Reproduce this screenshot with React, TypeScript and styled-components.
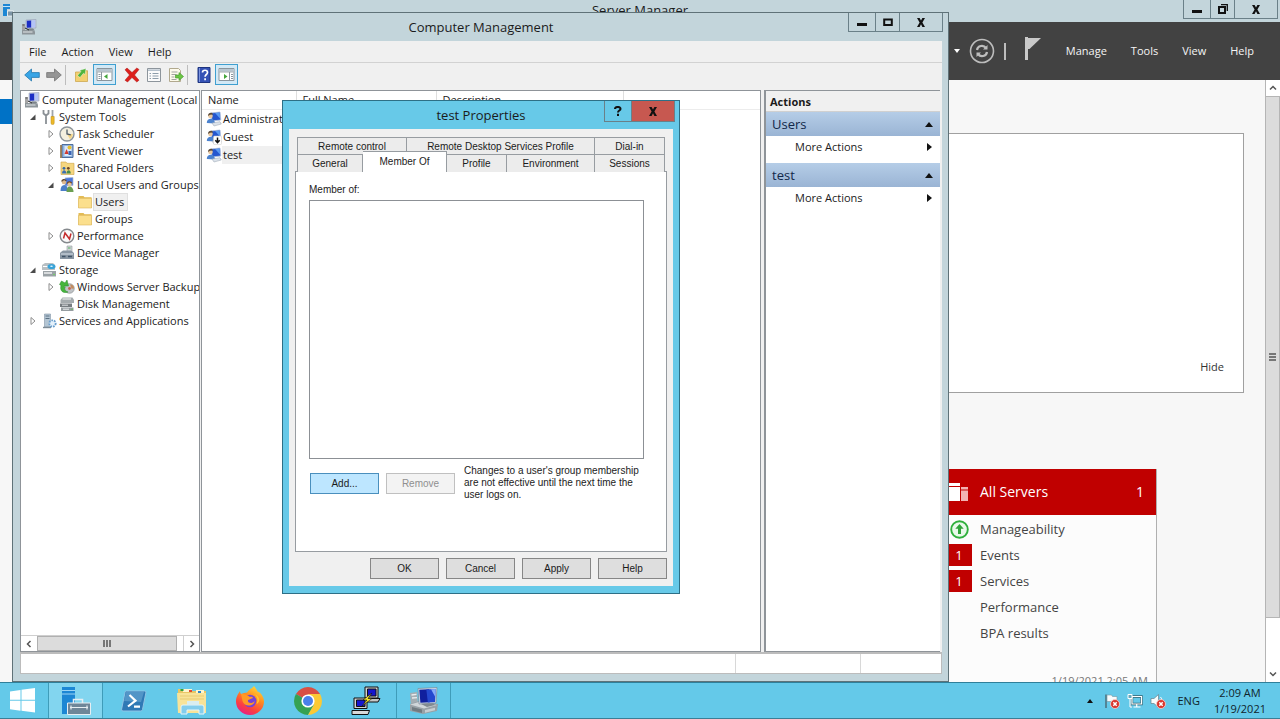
import React from 'react';
import styled, { createGlobalStyle, css } from 'styled-components';

const ui = '"Open Sans", "Noto Sans", sans-serif';
const classic = '"Liberation Sans", Arial, sans-serif';

const GlobalStyle = createGlobalStyle`
  *, *::before, *::after { box-sizing: border-box; }
  html, body { margin: 0; height: 100%; overflow: hidden; }
  body { font: 11px/16px ${ui}; color: #1b1b1b; }
  button, select { font: inherit; color: inherit; margin: 0; padding: 0; border: 0; background: none; border-radius: 0; }
  h1, h2, h3, p, ul { margin: 0; padding: 0; font-weight: 400; list-style: none; }
  svg { display: block; flex: none; }
`;

/* ---------- shell ---------- */
const Desktop = styled.div`
  display: flex;
  flex-direction: column;
  height: 100vh;
  background: #f7f7f7;
`;
const Workspace = styled.main`
  position: relative;
  flex: 1;
  min-height: 0;
  overflow: hidden;
`;

/* ---------- caption buttons ---------- */
const Captions = styled.div`
  position: absolute;
  top: 0;
  right: ${(p: { $right: number }) => p.$right}px;
  display: flex;
  border: 1px solid #6a8088;
  border-top: 0;
`;
const CaptionButton = styled.button<{ $w: number; $tone?: string; $h?: number }>`
  display: grid;
  place-items: center;
  width: ${(p) => p.$w}px;
  height: ${(p) => p.$h || 18}px;
  background: ${(p) => p.$tone || 'transparent'};
  & + & { border-left: 1px solid #6a8088; }
`;
const CloseGlyph = () => (
  <svg width="10" height="9" viewBox="0 0 10 9"><path d="M1 0h2.600L5 2.600 6.400 0H9L6.400 4.400 9 9H6.400L5 6.200 3.600 9H1l2.600-4.600z" fill="#111" /></svg>
);
const MinGlyph = () => (
  <svg width="10" height="9" viewBox="0 0 10 9"><path d="M0 5h10v3H0z" fill="#111" /></svg>
);
const MaxGlyph = () => (
  <svg width="10" height="9" viewBox="0 0 10 9"><path d="M1.200 1.500h7.600v5.600H1.200z" fill="none" stroke="#111" strokeWidth="2" /></svg>
);
const RestoreGlyph = () => (
  <svg width="10" height="10" viewBox="0 0 10 10"><path d="M3 .7h6.300V7" fill="none" stroke="#111" strokeWidth="1.300" /><path d="M1 3h6v6H1z" fill="none" stroke="#111" strokeWidth="2" /></svg>
);

/* ---------- server manager ---------- */
const ServerWindow = styled.section`
  display: flex;
  flex-direction: column;
  height: 100%;
`;
const ServerTitle = styled.header`
  position: relative;
  flex: none;
  height: 22px;
  background: #c3d5db;
  text-align: center;
  font-size: 13px;
  line-height: 21px;
  h2 { font-size: inherit; }
`;
const AppBadge = styled.span`
  position: absolute;
  left: 2px;
  top: 3px;
`;
const ServerBar = styled.nav`
  display: flex;
  flex: none;
  align-items: center;
  justify-content: flex-end;
  height: 58px;
  padding-right: 14px;
  background: #424242;
  color: #f5f5f5;
`;
const BarIcons = styled.div`
  display: flex;
  align-items: center;
  gap: 9px;
  margin-right: 13px;
`;
const BarRule = styled.span`
  width: 2px;
  height: 17px;
  margin-right: 10px;
  background: #bdbdbd;
`;
const BarLink = styled.button`
  height: 24px;
  padding: 0 12px;
  font-weight: 500;
`;
const ServerBody = styled.div`
  display: flex;
  flex: 1;
  min-height: 0;
`;
const ServerNav = styled.aside`
  width: 180px;
  padding-top: 19px;
`;
const NavSelected = styled.div`
  height: 25px;
  background: #0072c6;
`;
const ServerContent = styled.div`
  display: flex;
  flex: 1;
  flex-direction: column;
  align-items: flex-end;
  padding: 53px 21px 0 0;
  overflow: hidden;
`;
const Welcome = styled.div`
  display: flex;
  flex: none;
  align-items: flex-end;
  justify-content: flex-end;
  width: 100%;
  height: 260px;
  padding: 17px;
  border: 1px solid #a0a0a0;
  background: #fff;
`;
const HideButton = styled.button`
  padding: 0 2px;
  color: #333;
`;
const Tile = styled.article`
  display: flex;
  flex: none;
  flex-direction: column;
  width: 216px;
  height: 260px;
  margin: 76px 87px 0 0;
  border-right: 1px solid #b0b0b0;
  background: #fcfcfc;
`;
const TileHead = styled.header`
  display: flex;
  align-items: center;
  height: 46px;
  padding: 0 12px 0 8px;
  background: #c00000;
  color: #fff;
  font-size: 14px;
  svg { margin-right: 11px; }
  h3 { flex: 1; font-size: inherit; }
`;
const TileRows = styled.ul`
  padding-top: 1px;
`;
const TileRow = styled.li`
  display: flex;
  align-items: center;
  height: 26px;
  gap: 8px;
  padding-left: 5px;
  color: #444;
  font-size: 13px;
`;
const TileMark = styled.span<{ $alert?: boolean }>`
  display: grid;
  place-items: center;
  width: 26px;
  height: 22px;
  color: #fff;
  ${(p) => p.$alert && css`background: #c00000;`}
`;
const TileStamp = styled.p`
  margin-top: 27px;
  padding-right: 8px;
  text-align: right;
  color: #777;
`;
const VScroll = styled.div`
  display: flex;
  flex-direction: column;
  width: 15px;
  border-left: 1px solid #b5b5b5;
  background: #fff;
`;
const VArrow = styled.button`
  display: grid;
  place-items: center;
  height: 16px;
`;
const VThumb = styled.div`
  display: grid;
  place-items: center;
  flex: 1;
  margin-bottom: 48px;
  border: 1px solid #b5b5b5;
  border-left: 0;
  background: #dcdcdc;
`;

/* ---------- computer management ---------- */
const ManagementWindow = styled.section`
  position: absolute;
  inset: 12px 331px 0 12px;
  display: flex;
  flex-direction: column;
  padding: 0 6px 7px 7px;
  border: 1px solid #5f7278;
  background: #c3d5db;
`;
const ManagementTitle = styled.header`
  flex: none;
  height: 28px;
  text-align: center;
  h1 { font-size: 13px; line-height: 28px; }
`;
const TitleIcon = styled.span`
  position: absolute;
  left: 8px;
  top: 6px;
`;
const Client = styled.div`
  display: flex;
  flex: 1;
  flex-direction: column;
  min-height: 0;
  background: #f0f0f0;
`;
const MenuBar = styled.nav`
  display: flex;
  flex: none;
  height: 22px;
  gap: 5px;
  padding-left: 4px;
  border-bottom: 1px solid #d2d2d2;
`;
const MenuItem = styled.button`
  padding: 0 5px;
`;
const Toolbar = styled.div`
  display: flex;
  flex: none;
  align-items: center;
  height: 27px;
  gap: 1px;
  padding: 0 0 4px 1px;
`;
const Tool = styled.button<{ $on?: boolean; $apart?: boolean }>`
  display: grid;
  place-items: center;
  width: ${(p) => (p.$on ? 23 : 21)}px;
  height: 21px;
  margin-left: ${(p) => (p.$apart ? 4 : 0)}px;
  border: 1px solid ${(p) => (p.$on ? '#3f9fd0' : 'transparent')};
  background: ${(p) => (p.$on ? '#d3e9f6' : 'transparent')};
`;
const ToolRule = styled.span`
  width: 1px;
  height: 20px;
  margin-right: 4px;
  background: #bdbdbd;
`;
const Panes = styled.div`
  display: grid;
  flex: 1;
  min-height: 0;
  grid-template-columns: 180px minmax(0, 1fr) 178px;
  gap: 1px;
  padding-right: 2px;
`;
const Pane = styled.div`
  display: flex;
  flex-direction: column;
  min-width: 0;
  overflow: hidden;
  border: 1px solid #8f9499;
  background: #fff;
`;
const Tree = styled.ul`
  flex: 1;
  min-height: 0;
  overflow: hidden;
`;
const TreeRow = styled.li<{ $depth: number }>`
  display: flex;
  align-items: center;
  height: 17px;
  padding-left: ${(p) => p.$depth * 18}px;
  white-space: nowrap;
`;
const Twist = styled.span<{ $root?: boolean }>`
  display: grid;
  flex: none;
  place-items: center;
  width: ${(p) => (p.$root ? 2 : 19)}px;
  padding-left: ${(p) => (p.$root ? 0 : 5)}px;
`;
const TreeIcon = styled.span`
  display: grid;
  flex: none;
  place-items: center;
  width: 18px;
`;
const TreeLabel = styled.span<{ $selected?: boolean }>`
  flex: none;
  padding: 0 3px 0 1px;
  ${(p) => p.$selected && css`background: #f0f0f0; box-shadow: 0 0 0 1px #e0e0e0;`}
`;
const HScroll = styled.div`
  display: flex;
  flex: none;
  height: 16px;
  background: #fff;
  border-top: 1px solid #cfcfcf;
`;
const HArrow = styled.button`
  display: grid;
  place-items: center;
  width: 16px;
  &:last-child { border-left: 1px solid #cfcfcf; }
`;
const HThumb = styled.div`
  display: grid;
  place-items: center;
  flex: 1;
  margin-right: 6px;
  border: 1px solid #b0b0b0;
  background: #dcdcdc;
`;
const UserTable = styled.table`
  width: 100%;
  table-layout: fixed;
  border-collapse: collapse;
  th {
    height: 18px;
    padding: 0 6px;
    border-right: 1px solid #dedede;
    border-bottom: 1px solid #ececec;
    font-weight: 400;
    text-align: left;
  }
  th:last-child { border-right: 0; }
  td { height: 18px; padding: 0; }
`;
const UserCell = styled.span<{ $selected?: boolean }>`
  display: flex;
  align-items: center;
  height: 18px;
  padding-left: 4px;
  white-space: nowrap;
  span {
    flex: 1;
    padding: 1px 0 1px 1px;
    background: ${(p) => (p.$selected ? '#f0f0f0' : 'transparent')};
  }
`;
const ActionsPane = styled(Pane)`
  margin-left: 2px;
  border-width: 1px 0 1px 2px;
`;
const ActionsTitle = styled.h2`
  height: 21px;
  padding-left: 4px;
  border-bottom: 1px solid #d0d0d0;
  background: #f0f0f0;
  font-size: 11px;
  font-weight: 700;
  line-height: 21px;
`;
const ActionBand = styled.button`
  display: flex;
  flex: none;
  align-items: center;
  justify-content: space-between;
  height: 24px;
  padding: 0 7px 0 6px;
  background: linear-gradient(#b5cde7, #9ab4d4);
  color: #12284a;
  font-size: 13px;
`;
const ActionItem = styled.button`
  display: flex;
  flex: none;
  align-items: center;
  justify-content: space-between;
  height: 22px;
  margin-bottom: 5px;
  padding: 0 8px 0 29px;
`;
const StatusBar = styled.footer`
  display: grid;
  flex: none;
  grid-template-columns: 1fr 125px 81px;
  height: 22px;
  border: 1px solid #bcbcbc;
  border-width: 2px 1px 1px;
  background: #fff;
  span + span { border-left: 1px solid #d8d8d8; }
`;

/* ---------- properties dialog ---------- */
const Dialog = styled.section`
  position: absolute;
  left: 282px;
  top: 100px;
  width: 398px;
  padding: 0 6px 7px;
  border: 1px solid #2d6f86;
  background: #67c9e8;
  font: 10px/12px ${classic};
`;
const DialogTitle = styled.h2`
  height: 28px;
  font: 13px/28px ${ui};
  text-align: center;
`;
const DialogBody = styled.div`
  padding: 8px 6px 7px;
  background: #f0f0f0;
`;
const TabRow = styled.div<{ $cols: string }>`
  display: grid;
  grid-template-columns: ${(p) => p.$cols};
  height: 17px;
  margin: 0 2px;
`;
const Tab = styled.button<{ $active?: boolean }>`
  padding-top: 1px;
  border: 1px solid #979ca1;
  border-width: 1px 1px 0 0;
  background: #ececec;
  &:first-child { border-left-width: 1px; }
  ${(p) =>
    p.$active &&
    css`
      position: relative;
      height: 21px;
      margin-top: -3px;
      padding-bottom: 2px;
      background: #fff;
    `}
`;
const TabPanel = styled.div`
  height: 381px;
  padding: 12px 22px 12px 13px;
  border: 1px solid #979ca1;
  background: #fff;
  label { display: block; margin-bottom: 4px; }
`;
const MemberList = styled.select`
  display: block;
  width: 100%;
  height: 259px;
  border: 1px solid #8c9095;
  background: #fff;
  appearance: none;
  outline: 0;
`;
const MemberActions = styled.div`
  display: flex;
  gap: 7px;
  padding: 6px 0 0 1px;
  p { padding-left: 2px; white-space: nowrap; }
`;
const PushButton = styled.button<{ $hot?: boolean }>`
  flex: none;
  width: 69px;
  height: 21px;
  border: 1px solid ${(p) => (p.$hot ? '#4a8fbd' : '#868686')};
  background: ${(p) => (p.$hot ? '#bde6ff' : '#dedede')};
  &:disabled { color: #8f8f8f; background: #f3f3f3; border-color: #c0c0c0; }
  ${MemberActions} & { margin-top: 8px; }
`;
const DialogButtons = styled.footer`
  display: flex;
  justify-content: flex-end;
  gap: 7px;
  padding-top: 6px;
`;

/* ---------- taskbar ---------- */
const Taskbar = styled.nav`
  display: flex;
  flex: none;
  height: 37px;
  gap: 3px;
  border-top: 1px solid #2f7f9a;
  border-bottom: 1px solid #3a7f96;
  background: #64c9e9;
`;
const StartButton = styled.button`
  display: grid;
  place-items: center;
  width: 45px;
`;
const TaskButton = styled.button<{ $open?: boolean; $active?: boolean }>`
  display: grid;
  place-items: center;
  width: 55px;
  border: 1px solid ${(p) => (p.$open ? '#3f9cb9' : 'transparent')};
  border-width: 0 1px;
  background: ${(p) => (p.$active ? '#82d5ef' : 'transparent')};
`;
const Tray = styled.div`
  display: flex;
  align-items: center;
  gap: 7px;
  margin-left: auto;
  padding-right: 14px;
  color: #10242c;
`;
const TrayMore = styled.button`
  margin-right: 3px;
`;
const Language = styled.span`
  margin: 0 7px 0 4px;
`;
const Clock = styled.time`
  text-align: center;
`;

/* ---------- icons ---------- */
const ComputerIcon = ({ size = 16 }: { size?: number }) => (
  <svg width={size} height={size} viewBox="0 0 16 16">
    <path d="M5 1l10-.6V9L5 9.600z" fill="#c3cbe2" stroke="#9199ad" strokeWidth=".5" />
    <path d="M5.800 1.700l4.600-.2v7l-4.600.3z" fill="#1c2ec4" /><path d="M10.400 1.500l3.800-.2v7l-3.800.2z" fill="#b4c4f6" />
    <path d="M1 5h3v6H1z" fill="#a4a4a4" /><path d="M1.500 6h2" stroke="#555" />
    <path d="M8 9.600h4l2 2H7z" fill="#7d858b" />
    <path d="M1 11h11l2 1.400v3H1z" fill="#8d959a" /><path d="M2 13h9.500" stroke="#e2e6e8" /><path d="M4 9l4 2" stroke="#222" />
  </svg>
);
const BigComputerIcon = () => (
  <svg width="30" height="28" viewBox="0 0 30 28">
    <path d="M1 6l7-1 1 13H2z" fill="#a4adb3" /><path d="M2.500 8l5-.6M3 11l5-.4" stroke="#e9edef" strokeWidth="1.400" />
    <path d="M1 17l9-3 19 3-1 7-14 3-13-3z" fill="#98a1a7" /><path d="M1 17.500l9-2.500 18 3-13 3.500z" fill="#d0d6da" />
    <path d="M3 20l10 2.500V26L3 23.500z" fill="#717b81" /><path d="M16 23l10-2.200v2.500L16 25.700z" fill="#c7ced2" /><path d="M14 15h9l3 3-8 2-6-3z" fill="#818a90" />
    <path d="M9 1.500l19-1-1 15.500-17 1z" fill="#ccd7e6" stroke="#74808d" strokeWidth=".6" />
    <path d="M10.300 2.800l10-.5.6 12.900-9.500.6z" fill="#101f9e" /><path d="M17.300 2.500l9.500-.6-.8 13-7.100.5z" fill="#2448cf" /><path d="M22 2.200l4.800-.3-.5 8z" fill="#86aaf7" />
  </svg>
);
const UserIcon = ({ down }: { down?: boolean }) => (
  <svg width="16" height="16" viewBox="0 0 16 16">
    <path d="M5 2l9-1 .8 8L6 10z" fill="#2456cf" stroke="#b3c2dc" strokeWidth=".8" /><path d="M9 2l4.600-.5.5 6z" fill="#5b9bf2" />
    <circle cx="4.500" cy="5" r="2.300" fill="#e8c79f" /><path d="M2 5C2 2 4 1.600 5.200 1.800 6.600 2 7.200 3.500 7.200 3.500L4 3.800z" fill="#5b4a38" />
    <path d="M.8 12c0-3 1.800-4.300 4-4.300S9 9.500 9 12.500z" fill="#4b82cf" /><path d="M6 12l8-1.300 1.300 2.300L8 15z" fill="#dbe2ea" stroke="#96a2b0" strokeWidth=".5" />
    {down && <g><rect x="7.500" y="7" width="8" height="8.500" rx="1" fill="#fff" stroke="#c9c9c9" strokeWidth=".5" /><path d="M11.500 8.500v5M9.300 11.300l2.200 2.300 2.200-2.300" stroke="#111" strokeWidth="1.500" fill="none" /></g>}
  </svg>
);
const GroupsIcon = () => (
  <svg width="16" height="16" viewBox="0 0 16 16">
    <path d="M6 1l8-.5v8L6 9z" fill="#4b76db" stroke="#adb9cf" strokeWidth=".7" />
    <circle cx="5" cy="5" r="2.300" fill="#dcb88d" /><path d="M1.500 14c0-4 1.500-6 3.700-6S9 10 9 14z" fill="#4b7ec9" /><path d="M2.800 4.500C3 2.500 6 2 7.300 4" stroke="#59422e" strokeWidth="1.300" fill="none" />
    <circle cx="10.500" cy="7" r="2.200" fill="#e5c59b" /><path d="M7.500 15c0-3.500 1-5.500 3-5.500s4 2 4 5.500z" fill="#6a9f52" /><path d="M8.300 6.600c.4-2 3.500-2.200 4.400-.4" stroke="#73481f" strokeWidth="1.300" fill="none" />
  </svg>
);
const FolderIcon = () => (
  <svg width="16" height="16" viewBox="0 0 16 16">
    <path d="M1.500 2h5l1 1.300h7V14h-13z" fill="#e3bc55" /><path d="M1.500 4.300h13V14h-13z" fill="#fbdf8d" stroke="#dcb55a" strokeWidth=".6" />
  </svg>
);
const SharedIcon = () => (
  <svg width="16" height="16" viewBox="0 0 16 16">
    <path d="M2 2h5l1 1.300h7V14.500H2z" fill="#f5d67f" stroke="#cca348" strokeWidth=".6" />
    <circle cx="5" cy="8.300" r="1.400" fill="#3567a5" /><path d="M3 13.500c0-4.500 4.300-4.500 4.300 0z" fill="#3b6fb3" /><circle cx="9.300" cy="8.300" r="1.400" fill="#6b4427" /><path d="M7.500 13.500c0-4.500 4.300-4.500 4.300 0z" fill="#4a8b4c" />
  </svg>
);
const ToolsIcon = () => (
  <svg width="16" height="16" viewBox="0 0 16 16">
    <path d="M2.500 1v3.500L5 6.500 7.500 4.500V1M5 6v9" stroke="#8a9095" strokeWidth="1.800" fill="none" />
    <path d="M11.500 1v7" stroke="#a0a5aa" strokeWidth="1.800" /><path d="M10 7.500h3.200V14a1.600 1.600 0 01-3.200 0z" fill="#edb928" stroke="#b98a18" strokeWidth=".5" />
  </svg>
);
const ClockIcon = () => (
  <svg width="16" height="16" viewBox="0 0 16 16">
    <circle cx="8" cy="8" r="7" fill="#f3efdf" stroke="#8d949a" strokeWidth="1.400" /><path d="M8 8l3 5.200A6 6 0 0013.800 8z" fill="#f3d488" /><path d="M8 3.500V8l3.800.8" stroke="#4c5a68" strokeWidth="1.300" fill="none" />
  </svg>
);
const EventIcon = () => (
  <svg width="16" height="16" viewBox="0 0 16 16">
    <path d="M3 1.500h11v13H3z" fill="#8fb2df" stroke="#4e6e9d" /><path d="M5.500 3h7v10h-7z" fill="#dbe9f8" /><path d="M2 2v13" stroke="#8c6b3f" strokeWidth="1.600" />
    <circle cx="10.500" cy="4.500" r="2" fill="#e9c02f" /><path d="M7.500 6l2.300 5H5.500z" fill="#d3382f" /><path d="M9.500 8h3v4h-3z" fill="#3a64b4" />
  </svg>
);
const PerfIcon = () => (
  <svg width="16" height="16" viewBox="0 0 16 16">
    <circle cx="8" cy="8" r="6.800" fill="#fafafa" stroke="#85898d" strokeWidth="1.400" /><path d="M4.500 10.500L6 5l4.500 6 1.500-5.500" stroke="#c42c2c" strokeWidth="1.500" fill="none" />
  </svg>
);
const DeviceIcon = () => (
  <svg width="16" height="16" viewBox="0 0 16 16">
    <path d="M8 1h5v6H8z" fill="#d0d5d8" stroke="#959c9f" strokeWidth=".6" /><path d="M9 3h2.500" stroke="#53b25a" />
    <path d="M2 7l2-1.500h8L15 8v6H1V8z" fill="#8895a2" /><path d="M2 9h12" stroke="#cdd7e0" strokeWidth="1.200" /><path d="M3 11.500h3.500M9 11.500h4" stroke="#3f5368" strokeWidth="1.600" />
  </svg>
);
const StorageIcon = () => (
  <svg width="16" height="16" viewBox="0 0 16 16">
    <path d="M1 3l3-2h8l2 2v5H1z" fill="#b8bfc3" /><path d="M2 4.500h6" stroke="#fff" /><ellipse cx="10.500" cy="4.500" rx="4" ry="2.600" fill="#38a3d8" /><ellipse cx="10.500" cy="4.200" rx="1.300" ry=".8" fill="#e3f5ff" />
    <path d="M2 9h13v5.500H2z" fill="#9ba2a6" /><path d="M3 11h8" stroke="#f2f4f5" strokeWidth="1.400" /><circle cx="13" cy="12.500" r=".8" fill="#6bdc58" />
  </svg>
);
const BackupIcon = () => (
  <svg width="16" height="16" viewBox="0 0 16 16">
    <circle cx="10.500" cy="9.500" r="4.800" fill="#bfc3c6" stroke="#84888b" strokeWidth=".6" /><circle cx="10.500" cy="9.500" r="1.400" fill="#c46052" /><path d="M11 5.500a4 4 0 014 4l-2.500.3z" fill="#c48c5d" />
    <path d="M2.500 2L6 4l2-3 1.500 6H5L6 8.500c-1 2 0 3.500 3 4.500-5 2-8.500-1.500-7-6.500L.5 5.500z" fill="#46b53c" stroke="#28882b" strokeWidth=".5" />
  </svg>
);
const DiskIcon = () => (
  <svg width="16" height="16" viewBox="0 0 16 16">
    <path d="M1.500 4l2-2.500h10L15 4v3H1.500z" fill="#a5abae" /><path d="M3.500 3h8.500" stroke="#e7eaeb" strokeWidth="1.200" />
    <path d="M1 7.500h12V11H1z" fill="#777d81" /><path d="M3 9.200h6" stroke="#dfe3e5" /><path d="M2 11.500h12.500V15H2z" fill="#959ca0" /><path d="M4 13.200h6" stroke="#eceff0" /><circle cx="13" cy="13.200" r=".8" fill="#6ac556" />
  </svg>
);
const ServicesIcon = () => (
  <svg width="16" height="16" viewBox="0 0 16 16">
    <path d="M3.500 1h6v13h-6z" fill="#b3c5d3" stroke="#8396a6" strokeWidth=".6" /><path d="M4.500 3h4M4.500 5.500h4" stroke="#5c7284" /><path d="M2 14.500h8" stroke="#7d8b96" strokeWidth="1.400" />
    <circle cx="11.500" cy="10.500" r="3.200" fill="#e5f1fb" stroke="#6a9fcd" strokeWidth="1.800" strokeDasharray="1.700 1" />
  </svg>
);
const ArrowIcon = ({ back }: { back?: boolean }) => (
  <svg width="16" height="16" viewBox="0 0 16 16">
    <path d={back ? 'M.7 8l6.800-6v3.600H15.300v4.800H7.500V14z' : 'M15.300 8L8.500 2v3.600H.7v4.800h7.800V14z'} fill={back ? '#39a5e6' : '#969696'} stroke={back ? '#2479ae' : '#737373'} strokeWidth=".8" />
  </svg>
);
const UpFolderIcon = () => (
  <svg width="16" height="16" viewBox="0 0 16 16">
    <path d="M1.500 5h5l1-1.300h6V14.500h-12z" fill="#f4d071" stroke="#c8a145" strokeWidth=".7" /><path d="M3.500 8.500L7 4.500 5.700 3.300 12 1.500l-1 6-1.500-1.200L6 10.500z" fill="#51b43d" stroke="#fff" strokeWidth=".4" />
  </svg>
);
const PaneIcon = ({ right }: { right?: boolean }) => (
  <svg width="17" height="15" viewBox="0 0 17 15">
    <path d="M1 1.500h15v12H1z" fill="#fff" stroke="#8a959d" /><path d="M1.500 2h14v2.600h-14z" fill="#b9c6d0" /><path d="M1.500 5h14" stroke="#8a959d" strokeWidth=".8" />
    <path d={right ? 'M11.500 5v8M13 7.500h2M13 9.500h2M13 11.500h2' : 'M5.500 5v8M2.500 7.500h2M2.500 9.500h2M2.500 11.500h2'} stroke="#8a959d" />
    <path d={right ? 'M6 7l3.500 2.500L6 12z' : 'M11.500 7v5L8 9.500z'} fill="#43a53a" />
  </svg>
);
const DeleteIcon = () => (
  <svg width="16" height="16" viewBox="0 0 16 16">
    <path d="M1 2.800L3 1l5 4.500L12.800 1 15 2.500 10.500 8l4.500 5.200-2.200 1.800L8 10.500 3.500 15 1 13.200 5.500 8z" fill="#dd1f1c" stroke="#a61613" strokeWidth=".5" />
  </svg>
);
const SheetIcon = () => (
  <svg width="16" height="16" viewBox="0 0 16 16">
    <path d="M1.500 1.500h13v13h-13z" fill="#fbfbfb" stroke="#8d959c" /><path d="M2 3.200h12" stroke="#b6c2cd" strokeWidth="1.600" /><path d="M3.500 6.500h1.500M3.500 9h1.500M3.500 11.500h1.500M6.500 6.500h6M6.500 9h6M6.500 11.500h6" stroke="#8d9daa" />
  </svg>
);
const ExportIcon = () => (
  <svg width="16" height="16" viewBox="0 0 16 16">
    <path d="M1.500 1.500h9l2 2v11h-11z" fill="#fdfaec" stroke="#b1a98e" /><path d="M3.500 5h6M3.500 7.500h5M3.500 10h3M3.500 12.500h5" stroke="#a3a3a0" /><path d="M7.500 8h3.500V5.500l4.500 4-4.500 4V11H7.500z" fill="#6cc544" stroke="#3c9427" strokeWidth=".6" />
  </svg>
);
const HelpIcon = () => (
  <svg width="14" height="16" viewBox="0 0 14 16">
    <path d="M1 .500h12v15H1z" fill="#3552b5" stroke="#1e347f" /><path d="M2.500 1v14" stroke="#7d95df" /><path d="M5.500 5.500c0-3 5-3 5 0 0 2-2.400 2-2.400 4.200M8.100 11.200v2" stroke="#fff" strokeWidth="1.700" fill="none" />
  </svg>
);
const Expander = ({ open }: { open?: boolean }) => (
  <svg width="8" height="8" viewBox="0 0 8 8">
    {open ? <path d="M6.500 1.500v5.500H1z" fill="#4a4a4a" /> : <path d="M2 .500L6 4 2 7.500z" fill="#fff" stroke="#8d8d8d" />}
  </svg>
);
const Chevron = ({ d }: { d: string }) => (
  <svg width="8" height="8" viewBox="0 0 8 8"><path d={d} fill="none" stroke="#555" strokeWidth="1.500" /></svg>
);
const BandArrow = () => (
  <svg width="8" height="5" viewBox="0 0 8 5"><path d="M0 5l4-5 4 5z" fill="#111" /></svg>
);
const ItemArrow = () => (
  <svg width="5" height="8" viewBox="0 0 5 8"><path d="M0 0l5 4-5 4z" fill="#111" /></svg>
);
const RefreshIcon = () => (
  <svg width="26" height="26" viewBox="0 0 26 26" fill="none" stroke="#bdbdbd">
    <circle cx="13" cy="13" r="11.500" strokeWidth="1.600" /><path d="M8 12c.6-4.500 6.500-5.500 9-2M18 14c-.6 4.500-6.500 5.500-9 2" strokeWidth="2.200" /><path d="M18.500 7v4.500H14zM7.500 19v-4.500H12z" fill="#bdbdbd" stroke="none" />
  </svg>
);
const FlagIcon = () => (
  <svg width="16" height="28" viewBox="0 0 16 28"><path d="M0 0h3v23H0z" fill="#c9c9c9" /><path d="M3 1h13L4.500 12H3z" fill="#c9c9c9" /></svg>
);
const ServersIcon = () => (
  <svg width="20" height="20" viewBox="0 0 20 20"><path d="M0 1h11v3H0zM0 5h11v14H0z" fill="#fff" /><path d="M12 5h7v2.500h-7zM12 8.500h7V19h-7z" fill="#f2b3b3" /></svg>
);
const OnlineIcon = () => (
  <svg width="19" height="19" viewBox="0 0 19 19"><circle cx="9.500" cy="9.500" r="8.300" fill="#e9f9ea" stroke="#2fb03c" strokeWidth="1.900" /><path d="M9.500 4l4.200 4.800H11V14H8V8.800H5.300z" fill="#2fa43a" /></svg>
);
const ServerAppIcon = () => (
  <svg width="30" height="28" viewBox="0 0 30 28">
    <path d="M1 0h13v16H7v11H1z" fill="#1c87d4" /><path d="M1 3.500h13M1 7h13" stroke="#9bd4f5" />
    <path d="M12.500 16v-3.500h9V16" stroke="#e6eef2" strokeWidth="1.500" fill="none" /><path d="M6.500 16h23v11.500h-23z" fill="#6e8698" stroke="#e6eef2" /><path d="M9 20.500h18M10 18.500v4M26 18.500v4" stroke="#e6eef2" strokeWidth="1.200" />
  </svg>
);
const WindowsLogo = () => (
  <svg width="25" height="25" viewBox="0 0 25 25" fill="#fff"><path d="M0 3.500l10.500-1.600v9.900H0zM11.500 1.800L25 0v11.800H11.500zM0 12.800h10.500v9.900L0 21.200zM11.500 12.800H25v11.700l-13.500-1.800z" /></svg>
);
const PowerShellIcon = () => (
  <svg width="26" height="22" viewBox="0 0 26 22">
    <path d="M5.500 1h18q1.800 0 1.400 1.800L21.500 19.500q-.4 1.500-2 1.500H2q-1.800 0-1.400-1.800L4 2.400Q4.300 1 5.500 1z" fill="#2f79b5" stroke="#8fc3e4" /><path d="M5 2h18L20 12 3 11z" fill="#6ba9d4" opacity=".6" />
    <path d="M8.500 5l6 5.700L7 16.500M13 16.700h6" stroke="#fff" strokeWidth="2.200" fill="none" />
  </svg>
);
const ExplorerIcon = () => (
  <svg width="32" height="28" viewBox="0 0 32 28">
    <path d="M2 2h8l2 2h18v22H2z" fill="#e9c765" /><path d="M1 6h29v20H2z" fill="#f8e398" /><path d="M7 2h9v3H7zM20 3h8v3h-8z" fill="#fff6cf" /><path d="M4.500 2h3v2h-3z" fill="#30a340" /><path d="M13 3h3v2h-3z" fill="#e04a32" /><path d="M22 4h3v2h-3z" fill="#2b86c9" />
    <path d="M4 9h24M4 12h24" stroke="#e8cb72" /><path d="M5 27v-7q0-2 2-2h19q2 0 2 2v7h-5v-4H11v4z" fill="#83cdec" stroke="#e4f5fb" /><path d="M11 14h12v4H11z" fill="#d9edf0" />
  </svg>
);
const FirefoxIcon = () => (
  <svg width="30" height="30" viewBox="0 0 30 30">
    <defs><linearGradient id="ff" x1=".8" y1="0" x2=".3" y2="1"><stop offset="0" stopColor="#ffe13c" /><stop offset=".4" stopColor="#ff8b1f" /><stop offset=".75" stopColor="#fb3d42" /><stop offset="1" stopColor="#e3208a" /></linearGradient></defs>
    <path d="M19 0c2 2.500 3 4 3.500 5.500 1.500 0 6.500 4 6.500 10a14 13.500 0 01-28 0c0-5 2.500-8 4-10.500 0 1.500.5 2.500 1 3C8 7 10 6.500 12 6.500 14 3.500 17 2.500 19 0z" fill="url(#ff)" />
    <circle cx="15" cy="15" r="6.300" fill="#7543d8" /><path d="M6 8c4-.5 7 1 9 3 2-.5 3 .5 3 1-2 .3-3 1.700-5 2-1 3 4 4.500 6.500 1 .5 5-10 7-12 0z" fill="#ff9a24" /><path d="M19 8c3 2 4.500 6 2.500 10 4-1.500 4-8-2.500-10z" fill="#ffc52f" />
  </svg>
);
const ChromeIcon = () => (
  <svg width="28" height="28" viewBox="0 0 28 28">
    <path d="M14 14L1.900 7A14 14 0 0126.100 7z" fill="#d94f43" /><path d="M14 14L1.900 7A14 14 0 0014 28l6-10.500z" fill="#35a153" /><path d="M26.100 7H14l6 10.500L14 28A14 14 0 0026.100 7z" fill="#fbc934" />
    <circle cx="14" cy="14" r="6.600" fill="#fff" /><circle cx="14" cy="14" r="5" fill="#4a80ea" />
  </svg>
);
const PuttyIcon = () => (
  <svg width="30" height="30" viewBox="0 0 30 30" stroke="#111">
    <path d="M14 1h13v11H14z" fill="#d3d3d3" /><path d="M16.500 3h8.500v7h-8.500z" fill="#1616cf" /><path d="M15 12.500h14l-2 3.500H15z" fill="#c6c6c6" />
    <path d="M3 12h13v10.500H3z" fill="#d3d3d3" /><path d="M5.500 14h8.500v6.500H5.500z" fill="#1616cf" /><path d="M1 24.500h17.500L17 28.500H1z" fill="#d8d8d8" />
    <path d="M21 7l-9 7h4l-5 6 10-7.500h-4z" fill="#ffee29" strokeWidth=".6" />
  </svg>
);
const RedCross = () => (
  <g><circle cx="11" cy="11" r="4.500" fill="#d9352c" stroke="#f6d5d2" strokeWidth=".8" /><path d="M9.300 9.300l3.400 3.400M12.700 9.300l-3.400 3.400" stroke="#fff" strokeWidth="1.500" /></g>
);
const TrayFlag = () => (
  <svg width="16" height="16" viewBox="0 0 16 16"><path d="M2 1.500v13.500" stroke="#4c6e7a" strokeWidth="1.500" /><path d="M3 2h4.500l1 1.500H13V10H8L7 8.500H3z" fill="#f7fbfc" stroke="#7797a1" strokeWidth=".6" /><RedCross /></svg>
);
const TrayNet = () => (
  <svg width="16" height="16" viewBox="0 0 16 16"><path d="M5 3.500h9.500v7.500H5z" fill="#64c9e9" stroke="#32616f" strokeWidth="2.400" /><path d="M5 3.500h9.500v7.500H5zM9.700 11v2.700M6.500 14h7" fill="none" stroke="#fff" strokeWidth="1.200" /><path d="M1 1.500h4v4H1zM3 5.500V14h2" stroke="#fff" fill="#64a9be" /></svg>
);
const TraySound = () => (
  <svg width="16" height="16" viewBox="0 0 16 16"><path d="M1 5.500h3l4.500-4v13l-4.500-4H1z" fill="#f8fcfd" stroke="#64818c" strokeWidth=".7" /><path d="M10.500 4q1.500 1.500 1.500 4" stroke="#fff" fill="none" /><RedCross /></svg>
);

/* ---------- data ---------- */
type Node = { label: string; depth: number; icon: React.ReactNode; open?: boolean; leaf?: boolean; selected?: boolean };
const nodes: Node[] = [
  { label: 'System Tools', depth: 0, icon: <ToolsIcon />, open: true },
  { label: 'Task Scheduler', depth: 1, icon: <ClockIcon /> },
  { label: 'Event Viewer', depth: 1, icon: <EventIcon /> },
  { label: 'Shared Folders', depth: 1, icon: <SharedIcon /> },
  { label: 'Local Users and Groups', depth: 1, icon: <GroupsIcon />, open: true },
  { label: 'Users', depth: 2, icon: <FolderIcon />, leaf: true, selected: true },
  { label: 'Groups', depth: 2, icon: <FolderIcon />, leaf: true },
  { label: 'Performance', depth: 1, icon: <PerfIcon /> },
  { label: 'Device Manager', depth: 1, icon: <DeviceIcon />, leaf: true },
  { label: 'Storage', depth: 0, icon: <StorageIcon />, open: true },
  { label: 'Windows Server Backup', depth: 1, icon: <BackupIcon /> },
  { label: 'Disk Management', depth: 1, icon: <DiskIcon />, leaf: true },
  { label: 'Services and Applications', depth: 0, icon: <ServicesIcon /> },
];
const users = [
  { name: 'Administrator' },
  { name: 'Guest', down: true },
  { name: 'test', selected: true },
];

function ServerManager() {
  return (
    <ServerWindow>
      <ServerTitle>
        <AppBadge>
          <svg width="12" height="14" viewBox="0 0 12 14"><path d="M1 1h7v5H5v7H1z" fill="#1c87d4" /><path d="M1 3.500h7" stroke="#c3e4f7" /><path d="M5.500 8h6v5h-6z" fill="#7c95a5" stroke="#fff" strokeWidth=".7" /></svg>
        </AppBadge>
        <h2>Server Manager</h2>
        <Captions $right={2}>
          <CaptionButton $w={26} aria-label="Minimize"><MinGlyph /></CaptionButton>
          <CaptionButton $w={24} aria-label="Restore"><RestoreGlyph /></CaptionButton>
          <CaptionButton $w={43} aria-label="Close"><CloseGlyph /></CaptionButton>
        </Captions>
      </ServerTitle>
      <ServerBar>
        <BarIcons>
          <svg width="6" height="4" viewBox="0 0 6 4"><path d="M0 0h6L3 4z" fill="#fff" /></svg>
          <RefreshIcon />
          <BarRule />
          <FlagIcon />
        </BarIcons>
        <BarLink>Manage</BarLink>
        <BarLink>Tools</BarLink>
        <BarLink>View</BarLink>
        <BarLink>Help</BarLink>
      </ServerBar>
      <ServerBody>
        <ServerNav><NavSelected /></ServerNav>
        <ServerContent>
          <Welcome><HideButton>Hide</HideButton></Welcome>
          <Tile>
            <TileHead><ServersIcon /><h3>All Servers</h3><span>1</span></TileHead>
            <TileRows>
              <TileRow><TileMark><OnlineIcon /></TileMark>Manageability</TileRow>
              <TileRow><TileMark $alert>1</TileMark>Events</TileRow>
              <TileRow><TileMark $alert>1</TileMark>Services</TileRow>
              <TileRow><TileMark />Performance</TileRow>
              <TileRow><TileMark />BPA results</TileRow>
            </TileRows>
            <TileStamp>1/19/2021 2:05 AM</TileStamp>
          </Tile>
        </ServerContent>
        <VScroll>
          <VArrow aria-label="Scroll up"><Chevron d="M1 5.500l3-3 3 3" /></VArrow>
          <VThumb><svg width="7" height="8" viewBox="0 0 7 8"><path d="M0 1h7M0 4h7M0 7h7" stroke="#555" strokeWidth="1.500" /></svg></VThumb>
          <VArrow aria-label="Scroll down"><Chevron d="M1 2.500l3 3 3-3" /></VArrow>
        </VScroll>
      </ServerBody>
    </ServerWindow>
  );
}

function ComputerManagement() {
  return (
    <ManagementWindow>
      <ManagementTitle>
        <TitleIcon><ComputerIcon /></TitleIcon>
        <h1>Computer Management</h1>
        <Captions $right={5}>
          <CaptionButton $w={26} aria-label="Minimize"><MinGlyph /></CaptionButton>
          <CaptionButton $w={24} aria-label="Maximize"><MaxGlyph /></CaptionButton>
          <CaptionButton $w={43} aria-label="Close"><CloseGlyph /></CaptionButton>
        </Captions>
      </ManagementTitle>
      <Client>
        <MenuBar>
          <MenuItem>File</MenuItem>
          <MenuItem>Action</MenuItem>
          <MenuItem>View</MenuItem>
          <MenuItem>Help</MenuItem>
        </MenuBar>
        <Toolbar>
          <Tool aria-label="Back"><ArrowIcon back /></Tool>
          <Tool aria-label="Forward"><ArrowIcon /></Tool>
          <ToolRule />
          <Tool aria-label="Up one level"><UpFolderIcon /></Tool>
          <Tool $on aria-label="Show console tree"><PaneIcon /></Tool>
          <Tool $apart aria-label="Delete"><DeleteIcon /></Tool>
          <Tool aria-label="Properties"><SheetIcon /></Tool>
          <Tool aria-label="Export list"><ExportIcon /></Tool>
          <ToolRule />
          <Tool aria-label="Help topics"><HelpIcon /></Tool>
          <Tool $on aria-label="Show action pane"><PaneIcon right /></Tool>
        </Toolbar>
        <Panes>
          <Pane>
            <Tree>
              <TreeRow $depth={0}>
                <Twist $root />
                <TreeIcon><ComputerIcon /></TreeIcon>
                <TreeLabel>Computer Management (Local</TreeLabel>
              </TreeRow>
              {nodes.map((n) => (
                <TreeRow key={n.label} $depth={n.depth}>
                  <Twist>{!n.leaf && <Expander open={n.open} />}</Twist>
                  <TreeIcon>{n.icon}</TreeIcon>
                  <TreeLabel $selected={n.selected}>{n.label}</TreeLabel>
                </TreeRow>
              ))}
            </Tree>
            <HScroll>
              <HArrow aria-label="Scroll left"><Chevron d="M5.500 1l-3 3 3 3" /></HArrow>
              <HThumb><svg width="8" height="7" viewBox="0 0 8 7"><path d="M1 0v7M4 0v7M7 0v7" stroke="#555" strokeWidth="1.500" /></svg></HThumb>
              <HArrow aria-label="Scroll right"><Chevron d="M2.500 1l3 3-3 3" /></HArrow>
            </HScroll>
          </Pane>
          <Pane>
            <UserTable>
              <colgroup>
                <col style={{ width: 94 }} /><col style={{ width: 140 }} /><col style={{ width: 187 }} /><col />
              </colgroup>
              <thead>
                <tr><th>Name</th><th>Full Name</th><th>Description</th><th aria-label="Spare" /></tr>
              </thead>
              <tbody>
                {users.map((u) => (
                  <tr key={u.name}>
                    <td><UserCell $selected={u.selected}><UserIcon down={u.down} /><span>{u.name}</span></UserCell></td>
                    <td /><td /><td />
                  </tr>
                ))}
              </tbody>
            </UserTable>
          </Pane>
          <ActionsPane>
            <ActionsTitle>Actions</ActionsTitle>
            <ActionBand>Users<BandArrow /></ActionBand>
            <ActionItem>More Actions<ItemArrow /></ActionItem>
            <ActionBand>test<BandArrow /></ActionBand>
            <ActionItem>More Actions<ItemArrow /></ActionItem>
          </ActionsPane>
        </Panes>
        <StatusBar><span /><span /><span /></StatusBar>
      </Client>
    </ManagementWindow>
  );
}

function PropertiesDialog() {
  return (
    <Dialog role="dialog" aria-label="test Properties">
      <DialogTitle>test Properties</DialogTitle>
      <Captions $right={4}>
        <CaptionButton $w={26} $h={20} aria-label="Help">
          <svg width="8" height="10" viewBox="0 0 8 10"><path d="M1 3c0-2.700 5.500-2.700 5.500 0C6.500 4.600 4 4.500 4 6.500M4 7.800V10" stroke="#111" strokeWidth="2" fill="none" /></svg>
        </CaptionButton>
        <CaptionButton $w={43} $h={20} $tone="#c75850" aria-label="Close"><CloseGlyph /></CaptionButton>
      </Captions>
      <DialogBody>
        <TabRow role="tablist" $cols="110px 188px 1fr">
          <Tab role="tab">Remote control</Tab>
          <Tab role="tab">Remote Desktop Services Profile</Tab>
          <Tab role="tab">Dial-in</Tab>
        </TabRow>
        <TabRow role="tablist" $cols="66px 84px 60px 88px 1fr">
          <Tab role="tab">General</Tab>
          <Tab role="tab" $active aria-selected>Member Of</Tab>
          <Tab role="tab">Profile</Tab>
          <Tab role="tab">Environment</Tab>
          <Tab role="tab">Sessions</Tab>
        </TabRow>
        <TabPanel role="tabpanel">
          <label htmlFor="groups">Member of:</label>
          <MemberList id="groups" multiple />
          <MemberActions>
            <PushButton $hot>Add...</PushButton>
            <PushButton disabled>Remove</PushButton>
            <p>Changes to a user's group membership<br />are not effective until the next time the<br />user logs on.</p>
          </MemberActions>
        </TabPanel>
        <DialogButtons>
          <PushButton>OK</PushButton>
          <PushButton>Cancel</PushButton>
          <PushButton>Apply</PushButton>
          <PushButton>Help</PushButton>
        </DialogButtons>
      </DialogBody>
    </Dialog>
  );
}

export default function App() {
  return (
    <Desktop>
      <GlobalStyle />
      <Workspace>
        <ServerManager />
        <ComputerManagement />
        <PropertiesDialog />
      </Workspace>
      <Taskbar>
        <StartButton aria-label="Start"><WindowsLogo /></StartButton>
        <TaskButton $open $active aria-label="Server Manager"><ServerAppIcon /></TaskButton>
        <TaskButton aria-label="PowerShell"><PowerShellIcon /></TaskButton>
        <TaskButton aria-label="File Explorer"><ExplorerIcon /></TaskButton>
        <TaskButton aria-label="Firefox"><FirefoxIcon /></TaskButton>
        <TaskButton aria-label="Chrome"><ChromeIcon /></TaskButton>
        <TaskButton aria-label="PuTTY"><PuttyIcon /></TaskButton>
        <TaskButton $open aria-label="Computer Management"><BigComputerIcon /></TaskButton>
        <Tray>
          <TrayMore aria-label="Show hidden icons">
            <svg width="8" height="5" viewBox="0 0 8 5"><path d="M1 5l3-4 3 4z" fill="#111" /></svg>
          </TrayMore>
          <TrayFlag />
          <TrayNet />
          <TraySound />
          <Language>ENG</Language>
          <Clock>2:09 AM<br />1/19/2021</Clock>
        </Tray>
      </Taskbar>
    </Desktop>
  );
}
